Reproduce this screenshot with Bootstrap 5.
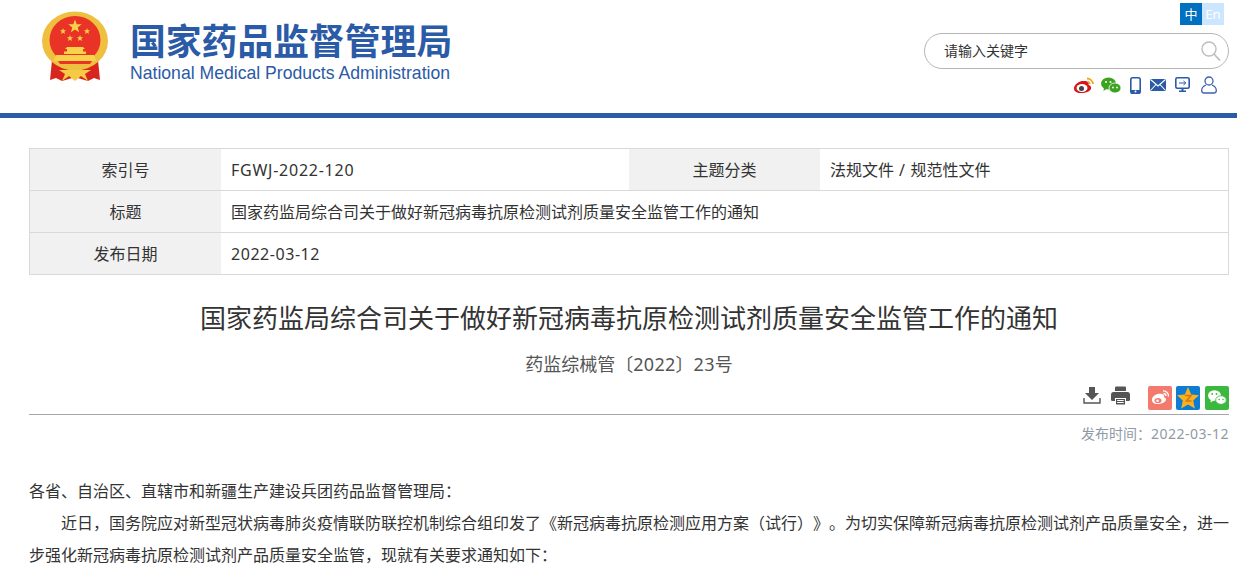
<!DOCTYPE html>
<html lang="zh-CN">
<head>
<meta charset="utf-8">
<title>国家药品监督管理局</title>
<link href="https://cdn.jsdelivr.net/npm/bootstrap@5.3.0/dist/css/bootstrap.min.css" rel="stylesheet">
<style>
html,body{height:572px;overflow:hidden}
body{font-family:"Noto Sans","Noto Sans CJK SC",sans-serif;color:#333;background:#fff;text-spacing-trim:space-all}
.site-head{height:113px;padding:0 8px 0 42px}
.emblem{width:66px;height:72px;margin-top:10px;flex:none}
.brand{margin-left:22px;margin-top:17px;width:322px}
.brand-cn{font-family:"Noto Sans CJK SC",sans-serif;font-weight:700;font-size:35.8px;line-height:44px;color:#2b5aa7;white-space:nowrap}
.brand-en{font-family:"Liberation Sans",sans-serif;font-size:17.62px;line-height:22px;color:#2b5aa7;white-space:nowrap;margin-top:1px}
.head-right{width:306px}
.langs{margin-top:3px;height:22px;margin-right:5px}
.lang-item{width:22px;height:22px;font-size:13px;line-height:22px;text-align:center;color:#fff;background:#0070c0}
.lang-item.off{background:#cce6ff}
.searchbox{width:305px;height:36px;margin-top:8px;border:1px solid #b5b5b5;border-radius:18px;padding:0 7px 0 19px}
.searchbox span{font-size:14px;color:#333;flex:1;padding-bottom:2px}
.quick{margin-top:4px;height:24px;padding-right:12px}
.quick svg{display:block}
.mr-a{margin-right:6px}.mr-b{margin-right:9px}.mr-c{margin-right:11px}
.blue-bar{height:5px;background:#2b5aa7}
.page-main{padding:30px 8px 0 29px}
.info-grid{border:1px solid #d9d9d9;width:1200px;height:127px;font-size:16px;color:#333;grid-template-columns:191px 408px 191px 1fr;grid-template-rows:42px 42px 1fr}
.info-grid>div{display:flex;align-items:center;padding:1px 0 0 10px;border-bottom:1px solid #d9d9d9}
.info-grid>div.last{border-bottom:0}
.info-grid>div.lab{justify-content:center;background:#f1f1f1;padding-left:0}
.info-grid>div.wide{grid-column:2 / 5}
.latin{letter-spacing:.75px}
.latin-d{letter-spacing:.55px}
.latin-s{letter-spacing:.5px}
.latin-t{letter-spacing:.3px}
.doc-title{font-family:"Noto Sans CJK SC",sans-serif;font-size:26px;font-weight:400;line-height:36px;margin:24px 0 0;text-align:center;color:#333;width:1200px}
.doc-num{font-size:18px;line-height:26px;margin-top:16px;text-align:center;color:#555;width:1200px}
.tools{height:37px;width:1200px;border-bottom:1px solid #a6a6a6;margin-top:1px;padding-top:8px}
.tools svg{display:block}
.ml-gap{margin-right:10px}.ml-gap2{margin-right:18px}.ml-gap3{margin-right:4px}.ml-gap4{margin-right:5px}
.doc-date{width:1200px;text-align:right;font-size:14px;line-height:20px;margin-top:9px;color:#8f9aa5}
.doc-body{width:1200px;font-size:16px;line-height:32px;margin-top:31px;color:#333}
.doc-body p{margin:0;text-align:justify}
.doc-body p.ind{text-indent:32px}
</style>
</head>
<body>
<header class="site-head d-flex justify-content-between">
  <div class="d-flex">
    <svg class="emblem" viewBox="0 0 66 72">
      <path d="M10 50 L8 70 L14 68 L20 71 L27 69 L33 67 L39 69 L46 71 L52 68 L58 70 L56 50Z" fill="#d8261f"/>
      <ellipse cx="33" cy="31" rx="33" ry="29.500" fill="#efc040"/>
      <path d="M20 71 L23 64 L17 60 H49 L43 64 L46 71 L39 66 L33 71 L27 66Z" fill="#f5cb45"/>
      <ellipse cx="33" cy="30" rx="25.500" ry="24" fill="#e93326"/>
      <polygon points="33,9.500 34.700,14.200 39.700,14.300 35.700,17.400 37.100,22.200 33,19.400 28.900,22.200 30.300,17.400 26.300,14.300 31.300,14.200" fill="#f8d24a"/>
      <polygon points="21,18 21.800,20.200 24.100,20.200 22.300,21.700 23,24 21,22.700 19,24 19.700,21.700 17.900,20.200 20.200,20.200" fill="#f8d24a"/>
      <polygon points="45,18 45.800,20.200 48.100,20.200 46.300,21.700 47,24 45,22.700 43,24 43.700,21.700 41.900,20.200 44.200,20.200" fill="#f8d24a"/>
      <polygon points="28,25 28.800,27.200 31.100,27.200 29.300,28.700 30,31 28,29.700 26,31 26.700,28.700 24.900,27.200 27.200,27.200" fill="#f8d24a"/>
      <polygon points="38,25 38.800,27.200 41.100,27.200 39.300,28.700 40,31 38,29.700 36,31 36.700,28.700 34.900,27.200 37.200,27.200" fill="#f8d24a"/>
      <path d="M25 37 H41 L43 39 H41 V41.500 H44 V44 H22 V41.500 H25 V39 H23Z" fill="#f8d24a"/>
      <path d="M14 45 H52 L54 51 H12Z" fill="#f8d24a"/>
      <path d="M16 51 H50 L48 54 H18Z" fill="#e93326"/>
    </svg>
    <div class="brand">
      <div class="brand-cn">国家药品监督管理局</div>
      <div class="brand-en">National Medical Products Administration</div>
    </div>
  </div>
  <div class="head-right d-flex flex-column align-items-end">
    <div class="langs d-flex"><div class="lang-item">中</div><div class="lang-item off">En</div></div>
    <div class="searchbox d-flex align-items-center"><span>请输入关键字</span>
      <svg width="20" height="21" viewBox="0 0 20 21" fill="none" stroke="#bdbdbd"><circle cx="8" cy="8" r="7" stroke-width="1.400"/><path d="M13 13 L19 19.500" stroke-width="1.800"/></svg>
    </div>
    <div class="quick d-flex align-items-center">
      <svg class="mr-a" width="22" height="17" viewBox="0 0 22 17"><path d="M9 4 C4 5 .5 9 1 12 C1.500 15.500 6 16.500 10 16 C15 15.500 19 13 18 10 C17.500 8.500 16 8 15.500 8 C16.500 5.500 15 3.500 9 4Z" fill="#d8161a"/><ellipse cx="9" cy="11" rx="5.500" ry="4" fill="#fff"/><circle cx="8.500" cy="11.500" r="2.500" fill="#444"/><path d="M14 1.500 A6 6 0 0 1 20 7" stroke="#f0a81e" stroke-width="1.800" fill="none"/><path d="M14.500 4.500 A3 3 0 0 1 17 7" stroke="#f0a81e" stroke-width="1.500" fill="none"/></svg>
      <svg class="mr-b" width="20" height="17" viewBox="0 0 20 17"><ellipse cx="7.500" cy="6.500" rx="7.500" ry="6" fill="#3ca21f"/><path d="M3 10 L2.500 14 L7 11Z" fill="#3ca21f"/><ellipse cx="14" cy="11" rx="6" ry="5" fill="#3ca21f" stroke="#fff" stroke-width=".8"/><circle cx="5" cy="5" r="1" fill="#fff"/><circle cx="9.500" cy="5" r="1" fill="#fff"/><circle cx="12" cy="10.500" r=".9" fill="#fff"/><circle cx="16" cy="10.500" r=".9" fill="#fff"/></svg>
      <svg class="mr-b" width="11" height="17" viewBox="0 0 11 17"><rect x=".8" y=".8" width="9.400" height="15.400" rx="1.800" fill="#fff" stroke="#2b5aa7" stroke-width="1.600"/><rect x="1" y="13" width="9" height="3" fill="#2b5aa7"/><circle cx="5.500" cy="14.500" r="1" fill="#fff"/></svg>
      <svg class="mr-b" width="16" height="12" viewBox="0 0 16 12"><rect width="16" height="12" rx="1" fill="#2b5aa7"/><path d="M.5 .5 L8 7 L15.500 .5 M.5 11.500 L6 5.500 M15.500 11.500 L10 5.500" stroke="#fff" stroke-width="1.100" fill="none"/></svg>
      <svg class="mr-c" width="15" height="16" viewBox="0 0 15 16"><rect x=".8" y=".8" width="13.400" height="10.400" rx="1.500" fill="#fff" stroke="#2b5aa7" stroke-width="1.600"/><path d="M4 6 H10.500 M8.500 4 L10.800 6 L8.500 8" stroke="#2b5aa7" fill="none"/><path d="M6.500 11 H8.500 V13.500 H11 V15 H4 V13.500 H6.500Z" fill="#2b5aa7"/></svg>
      <svg width="16" height="18" viewBox="0 0 16 18" fill="none" stroke="#3f62ab" stroke-width="1.300"><circle cx="8" cy="5" r="4"/><path d="M5 9 C2.500 10 .7 12 .7 14.500 C.7 16 1.500 17 3 17 H13 C14.500 17 15.300 16 15.300 14.500 C15.300 12 13.500 10 11 9"/></svg>
    </div>
  </div>
</header>
<div class="blue-bar"></div>
<main class="page-main">
  <div class="info-grid d-grid">
    <div class="lab">索引号</div><div><span class="latin">FGWJ-2022-120</span></div><div class="lab">主题分类</div><div>法规文件<span class="latin">&nbsp;/&nbsp;</span>规范性文件</div>
    <div class="lab">标题</div><div class="wide">国家药监局综合司关于做好新冠病毒抗原检测试剂质量安全监管工作的通知</div>
    <div class="lab last">发布日期</div><div class="wide last"><span class="latin-d">2022-03-12</span></div>
  </div>
  <h1 class="doc-title">国家药监局综合司关于做好新冠病毒抗原检测试剂质量安全监管工作的通知</h1>
  <div class="doc-num">药监综械管〔<span class="latin-t">2022</span>〕<span class="latin-t">23</span>号</div>
  <div class="tools d-flex justify-content-end align-items-start">
    <svg class="ml-gap" width="18" height="18" viewBox="0 0 18 18"><path d="M6 1 H12 V7 H16 L9 14 L2 7 H6Z" fill="#555"/><path d="M1 12 V17 H17 V12" stroke="#555" stroke-width="1.400" fill="none"/></svg>
    <svg class="ml-gap2" width="19" height="19" viewBox="0 0 19 19"><path d="M4 1.500 Q4 .5 5 .5 H14 Q15 .5 15 1.500 V5 H4Z" fill="#555"/><path d="M2.500 6 H16.500 Q19 6 19 9 V14 Q19 15 17.500 15 H15 V12 H4 V15 H1.500 Q0 15 0 14 V9 Q0 6 2.500 6Z" fill="#555"/><rect x="5" y="13" width="9" height="5.500" fill="#555"/><rect x="6.200" y="14" width="6.500" height="1" fill="#fff"/><rect x="6.200" y="16" width="6.500" height="1" fill="#fff"/></svg>
    <svg class="ml-gap3" width="24" height="24" viewBox="0 0 24 24"><rect width="24" height="24" rx="2" fill="#f37a6d"/><path d="M9.500 8 C6 9 3.500 12 4 14.500 C4.500 17.500 8 18.500 11 18 C15 17.500 18.500 15.500 18 13 C17.500 11.800 16.500 11.500 16 11.500 C17 9 15 7 9.500 8Z" fill="#fff"/><ellipse cx="10" cy="14.500" rx="3.500" ry="2.600" fill="#f37a6d"/><circle cx="9.500" cy="14.800" r="1.300" fill="#fff"/><path d="M15 5 A5 5 0 0 1 20.500 10.500 M15.500 7.500 A2.500 2.500 0 0 1 18 10" stroke="#fff" stroke-width="1.300" fill="none"/></svg>
    <svg class="ml-gap4" width="24" height="24" viewBox="0 0 24 24"><rect width="24" height="24" rx="2" fill="#0c7cd5"/><polygon points="12,1 15.200,8.500 23,9.300 17.200,14.500 18.800,22.500 12,18.400 5.200,22.500 6.800,14.500 1,9.300 8.800,8.500" fill="#f9b21b"/><path d="M9 9.500 H15 L10.500 15 H15.500" stroke="#d8761a" stroke-width="1.600" fill="none"/></svg>
    <svg width="24" height="24" viewBox="0 0 24 24"><rect width="24" height="24" rx="2" fill="#3bb93f"/><ellipse cx="9.500" cy="9.500" rx="6.500" ry="5.300" fill="#fff"/><path d="M6 13 L5.500 16.500 L9.500 14Z" fill="#fff"/><ellipse cx="16" cy="14" rx="5.300" ry="4.300" fill="#fff" stroke="#3bb93f" stroke-width=".8"/><circle cx="7.200" cy="8" r=".9" fill="#3bb93f"/><circle cx="11.500" cy="8" r=".9" fill="#3bb93f"/><circle cx="14.200" cy="13.500" r=".8" fill="#3bb93f"/><circle cx="18" cy="13.500" r=".8" fill="#3bb93f"/></svg>
  </div>
  <div class="doc-date">发布时间：<span class="latin-s">2022-03-12</span></div>
  <div class="doc-body">
    <p>各省、自治区、直辖市和新疆生产建设兵团药品监督管理局：</p>
    <p class="ind">近日，国务院应对新型冠状病毒肺炎疫情联防联控机制综合组印发了《新冠病毒抗原检测应用方案（试行）》。为切实保障新冠病毒抗原检测试剂产品质量安全，进一步强化新冠病毒抗原检测试剂产品质量安全监管，现就有关要求通知如下：</p>
  </div>
</main>
</body>
</html>
